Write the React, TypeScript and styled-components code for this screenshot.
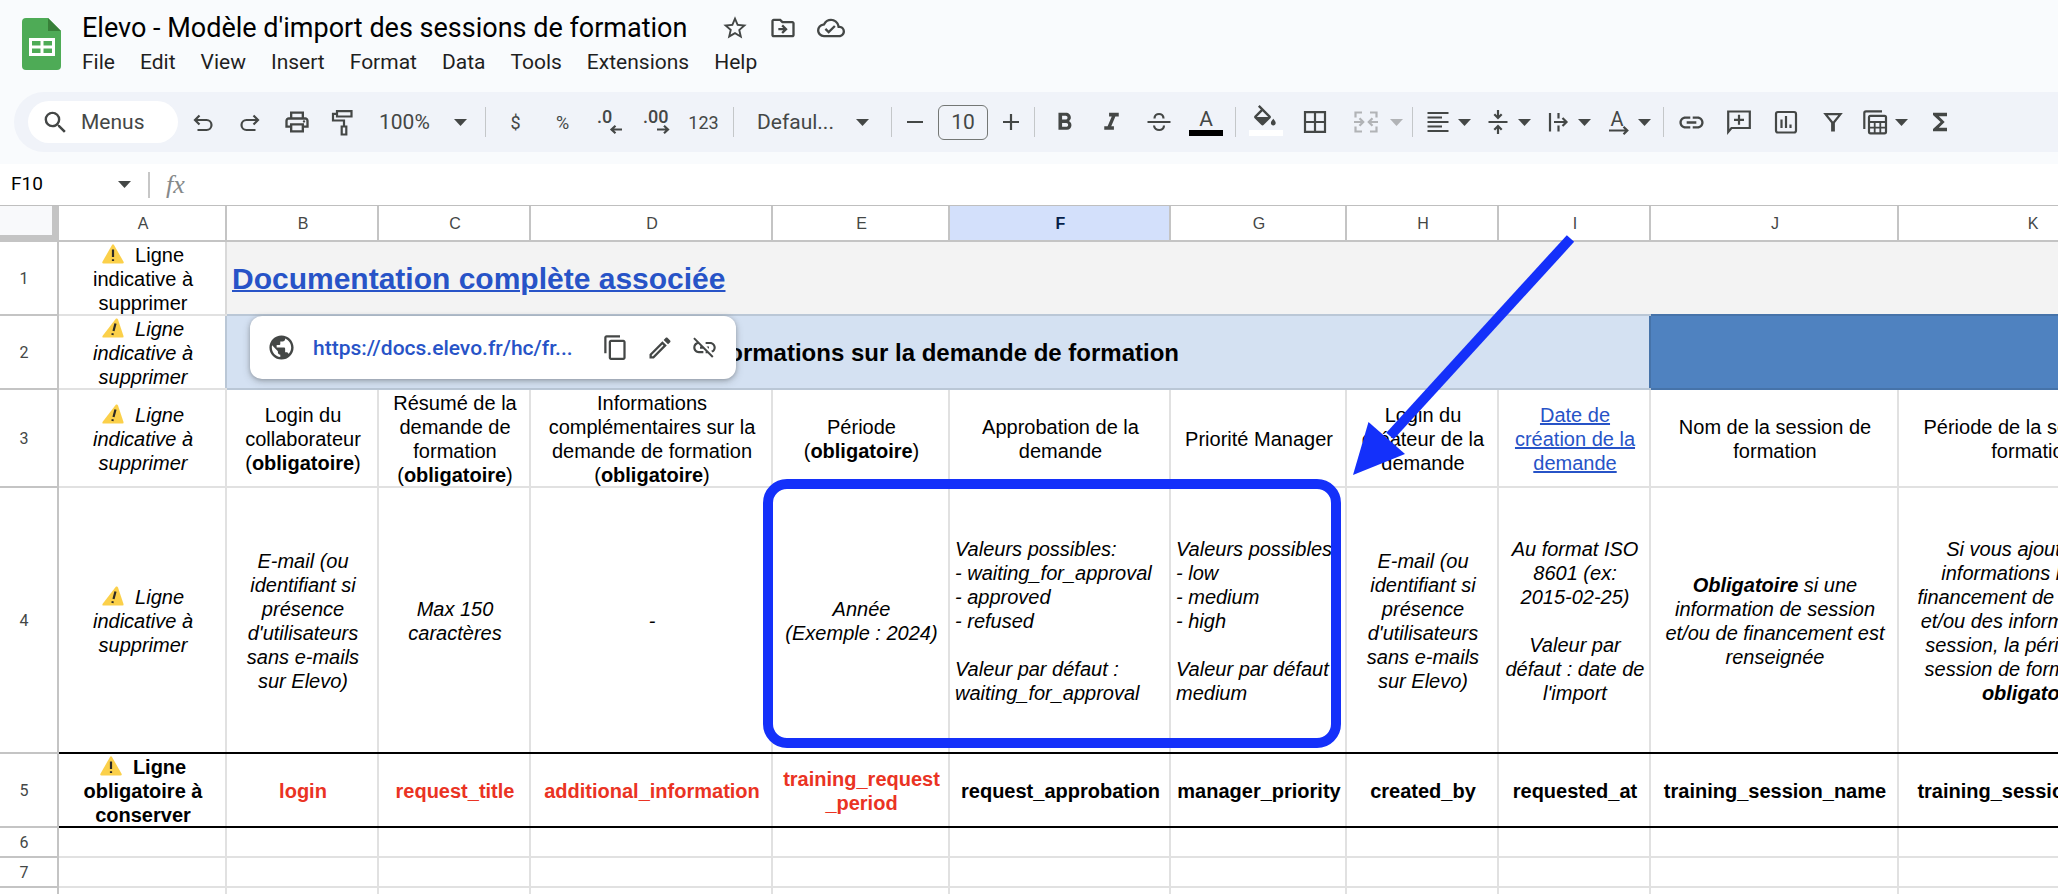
import React from "react";
import styled, { createGlobalStyle, css } from "styled-components";
import {
  MdContentCopy,
  MdFormatBold,
  MdFormatItalic,
  MdFunctions,
  MdLink,
  MdLinkOff,
  MdOutlineCloudDone,
  MdOutlineDriveFileMove,
  MdOutlineEdit,
  MdOutlinePrint,
  MdPublic,
  MdSearch,
  MdStarOutline,
} from "react-icons/md";

const ui = '"Roboto", "Liberation Sans", sans-serif';
const sheetFont = '"Liberation Sans", Arial, sans-serif';
const ink = "#444746";
const line = "#e1e1e1";
const headLine = "#c4c4c4";
const paleBlue = "#d4e1f2";
const paleBlueLine = "#bac7d6";
const midBlue = "#4f82c0";
const midBlueLine = "#4673a9";
const marker = "#1430fa";

const GlobalStyle = createGlobalStyle`
  *, *::before, *::after { box-sizing: border-box; }
  body { margin: 0; background: #f9fbfd; font-family: ${ui}; color: #000; }
  button, input, select { font: inherit; color: inherit; }
`;

const Page = styled.div`
  display: flex;
  flex-direction: column;
  height: 100vh;
  overflow: hidden;
`;

/* ---------- title and menus ---------- */

const Header = styled.header`
  display: flex;
  align-items: flex-start;
  gap: 21px;
  height: 92px;
  flex: none;
  padding: 10px 22px 0;
`;

const LogoLink = styled.a`
  display: block;
  margin-top: 8px;
  height: 52px;
`;

const TitleRow = styled.div`
  display: flex;
  align-items: center;
  gap: 34px;
  height: 36px;
`;

const Title = styled.h1`
  margin: 0;
  font-size: 27px;
  line-height: 36px;
  font-weight: 400;
  white-space: nowrap;
`;

const TitleActions = styled.div`
  display: flex;
  gap: 20px;
`;

const PlainButton = styled.button`
  display: flex;
  align-items: center;
  justify-content: center;
  padding: 0;
  border: 0;
  background: none;
  color: ${ink};
`;

const MenuBar = styled.nav`
  display: flex;
  gap: 25px;
`;

const MenuItem = styled.button`
  padding: 0;
  border: 0;
  background: none;
  color: #1f1f1f;
  font-size: 21px;
  line-height: 32px;
`;

/* ---------- toolbar ---------- */

const Toolbar = styled.div`
  display: flex;
  align-items: center;
  flex: none;
  height: 60px;
  margin-left: 14px;
  padding-left: 14px;
  border-radius: 30px 0 0 30px;
  background: #f0f3f9;
  color: ${ink};
  font-size: 21px;
  overflow: hidden;
`;

const SearchPill = styled.label`
  display: flex;
  align-items: center;
  gap: 11px;
  flex: none;
  width: 150px;
  height: 42px;
  margin-right: 1px;
  padding-left: 13px;
  border-radius: 21px;
  background: #fff;
`;

const SearchInput = styled.input`
  width: 80px;
  padding: 0;
  border: 0;
  outline: 0;
  background: none;
  &::placeholder { color: ${ink}; opacity: 1; }
`;

const Tool = styled(PlainButton)<{ $w?: number; $small?: boolean }>`
  flex: none;
  width: ${(p) => p.$w ?? 47}px;
  height: 42px;
  ${(p) => p.$small && css`font-size: 18px;`}
`;

const MenuTool = styled(PlainButton)<{ $wide?: boolean; $off?: boolean }>`
  flex: none;
  justify-content: flex-start;
  width: ${(p) => (p.$wide ? 66 : 60)}px;
  height: 42px;
  gap: ${(p) => (p.$wide ? 9 : 5)}px;
  padding-left: ${(p) => (p.$wide ? 11 : 4)}px;
  ${(p) => p.$off && css`color: #b1b3b6;`}
`;

const Divider = styled.span<{ $tight?: boolean }>`
  flex: none;
  width: 1px;
  height: 30px;
  margin: 0 ${(p) => (p.$tight ? 4 : 6)}px;
  background: #c4c7c9;
`;

const Picker = styled.label<{ $w: number; $pad: number }>`
  display: flex;
  align-items: center;
  flex: none;
  width: ${(p) => p.$w}px;
  padding: 0 ${(p) => (p.$w > 120 ? 16 : 12)}px 0 ${(p) => p.$pad}px;
`;

const PickerSelect = styled.select`
  flex: 1;
  min-width: 0;
  padding: 0;
  border: 0;
  appearance: none;
  background: none;
`;

const SizeInput = styled.input`
  flex: none;
  width: 50px;
  height: 35px;
  margin: 0 6px;
  padding: 0;
  border: 1px solid #747775;
  border-radius: 6px;
  background: none;
  text-align: center;
`;

/* ---------- formula bar ---------- */

const FormulaBar = styled.div`
  display: flex;
  align-items: center;
  flex: none;
  height: 41px;
  margin-top: 12px;
  padding-left: 11px;
  background: #fff;
  color: ${ink};
`;

const NameBox = styled.input`
  width: 107px;
  padding: 0 0 2px;
  border: 0;
  background: none;
  color: #000;
  font-size: 19px;
`;

const FormulaDivider = styled.span`
  width: 2px;
  height: 26px;
  margin: 0 16px 0 17px;
  background: #c7c7c7;
`;

const Fx = styled.span`
  color: #85898a;
  font: italic 26px/30px "Liberation Serif", serif;
`;

const FormulaInput = styled.input`
  flex: 1;
  margin-left: 16px;
  border: 0;
  outline: 0;
  background: none;
`;

/* ---------- sheet ---------- */

const Viewport = styled.main`
  flex: 1;
  min-height: 0;
  overflow: hidden;
  border-top: 1px solid #bfbfbf;
  background: #fff;
`;

const Sheet = styled.div`
  position: relative;
  width: max-content;
`;

const Grid = styled.table`
  table-layout: fixed;
  width: 2167px;
  border-collapse: separate;
  border-spacing: 0;
  font: 20px/24px ${sheetFont};
`;

/* Grid lines are inset shadows, so they take no room from the cell's text. */
const gridLines = (right: string, bottom: string) => css`
  box-shadow: inset 0 -2px 0 ${bottom}, inset -2px 0 0 ${right};
`;

const Corner = styled.td`
  height: 36px;
  padding: 0;
  border: solid ${headLine};
  border-width: 0 7px 7px 0;
  background: #f8f9fb;
`;

const ColHead = styled.th<{ $on?: boolean }>`
  height: 36px;
  padding: 0;
  ${gridLines(headLine, headLine)}
  background: ${(p) => (p.$on ? "#d3e0fb" : "#fff")};
  color: ${(p) => (p.$on ? "#041e49" : ink)};
  font-size: 16px;
  font-weight: ${(p) => (p.$on ? 700 : 400)};
`;

const RowHead = styled.th`
  padding: 0 11px 0 0;
  ${gridLines(headLine, headLine)}
  background: #fff;
  color: ${ink};
  font: 400 16px/24px ${ui};
`;

const Row = styled.tr<{ $h: number }>`
  height: ${(p) => p.$h}px;
`;

const Cell = styled.td<{
  $italic?: boolean;
  $bold?: boolean;
  $left?: boolean;
  $red?: boolean;
  $fill?: string;
  $right?: string;
  $bottom?: string;
}>`
  padding: 0 ${(p) => (p.$left ? 5 : 0)}px;
  ${(p) => gridLines(p.$right ?? line, p.$bottom ?? line)}
  background: ${(p) => p.$fill ?? "#fff"};
  color: ${(p) => (p.$red ? "#ea3323" : "#000")};
  font-style: ${(p) => (p.$italic ? "italic" : "normal")};
  font-weight: ${(p) => (p.$bold ? 700 : 400)};
  text-align: ${(p) => (p.$left ? "left" : "center")};
  vertical-align: middle;
  white-space: pre;
  overflow: hidden;
`;

const SheetLink = styled.a<{ $big?: boolean }>`
  color: #2753c7;
  text-decoration: underline;
  text-decoration-thickness: 2px;
  ${(p) => p.$big && css`font-size: 30px; line-height: 36px; font-weight: 700;`}
`;

const Band = styled.span`
  font-size: 24px;
  line-height: 30px;
`;

const WarnSvg = styled.svg`
  width: 22px;
  height: 20px;
  vertical-align: -2px;
`;

/* ---------- layers above the sheet ---------- */

const LinkCard = styled.div`
  position: absolute;
  left: 250px;
  top: 110px;
  display: flex;
  align-items: center;
  width: 486px;
  height: 63px;
  padding: 0 18px 0 17px;
  border-radius: 12px;
  background: #fff;
  box-shadow: 0 1px 4px rgba(60, 64, 67, 0.35), 0 3px 8px rgba(60, 64, 67, 0.2);
  color: ${ink};
`;

const CardUrl = styled.a`
  flex: 1;
  margin-left: 17px;
  color: #2753c7;
  font-size: 21px;
  font-weight: 500;
  text-decoration: none;
`;

const CardActions = styled.div`
  display: flex;
  gap: 17px;
`;

const Frame = styled.div`
  position: absolute;
  left: 763px;
  top: 273px;
  width: 578px;
  height: 269px;
  border: 10px solid ${marker};
  border-radius: 24px;
  pointer-events: none;
`;

const ArrowLayer = styled.svg`
  position: absolute;
  left: 1340px;
  top: 24px;
  pointer-events: none;
`;

/* ---------- drawings ---------- */

const Caret = () => (
  <svg width="13" height="7" viewBox="0 0 13 7" fill="currentColor" aria-hidden="true">
    <path d="M0 0H13L6.500 7Z" />
  </svg>
);

const Glyph = ({ w = 30, children }: { w?: number; children: React.ReactNode }) => (
  <svg
    width={w}
    height="30"
    viewBox={`0 0 ${w} 30`}
    fill="none"
    stroke="currentColor"
    strokeWidth="2.2"
    overflow="visible"
    aria-hidden="true"
  >
    {children}
  </svg>
);

const letter = { fill: "currentColor", stroke: "none", fontFamily: "Roboto, sans-serif" };

const Logo = () => (
  <svg width="39" height="52" viewBox="0 0 39 52" aria-hidden="true">
    <path d="M4 0H26L39 13V48a4 4 0 0 1-4 4H4a4 4 0 0 1-4-4V4a4 4 0 0 1 4-4Z" fill="#4eab56" />
    <path d="M26 0L39 13H26Z" fill="#388039" />
    <path d="M7 20H33V38H7ZM10 23V27.500H18.500V23ZM21.500 23V27.500H30V23ZM10 30.500V35H18.500V30.500ZM21.500 30.500V35H30V30.500Z" fill="#fff" fillRule="evenodd" />
  </svg>
);

const Warn = ({ slant }: { slant?: boolean }) => (
  <WarnSvg viewBox="0 0 22 20" role="img" aria-label="Attention">
    <path
      d={slant ? "M14 0.500Q15.500 0 16 1.500L21.500 18Q22 19.500 20.500 19.500H1Q0 19.500 0.500 18Z" : "M10 1Q11 -0.500 12 1L21.700 18Q22 19.500 20.500 19.500H1.500Q0 19.500 0.300 18Z"}
      fill="#fbd04a"
    />
    <path
      d={slant ? "M13.500 5.500L11.500 13M10.800 15.200L10.400 17" : "M11 5.500V13M11 15.200V17"}
      stroke="#2c2a26"
      strokeWidth="2.200"
    />
  </WarnSvg>
);

/* ---------- content ---------- */

const menus = ["File", "Edit", "View", "Insert", "Format", "Data", "Tools", "Extensions", "Help"];
const columns = [168, 152, 152, 242, 177, 221, 176, 152, 152, 248, 268];
const letters = "ABCDEFGHIJK".split("");

const Note = ({ bottom, right }: { bottom?: string; right?: string }) => (
  <Cell $italic $bottom={bottom} $right={right}>
    <Warn slant />
    {"\u00a0 Ligne\nindicative à\nsupprimer"}
  </Cell>
);

const mailHint = "E-mail (ou\nidentifiant si\nprésence\nd'utilisateurs\nsans e-mails\nsur Elevo)";

const fields: { name: string; required?: boolean }[] = [
  { name: "login", required: true },
  { name: "request_title", required: true },
  { name: "additional_information", required: true },
  { name: "training_request\n_period", required: true },
  { name: "request_approbation" },
  { name: "manager_priority" },
  { name: "created_by" },
  { name: "requested_at" },
  { name: "training_session_name" },
  { name: "training_session_period" },
];

const TopBar = () => (
  <Header>
    <LogoLink href="#" aria-label="Sheets home">
      <Logo />
    </LogoLink>
    <div>
      <TitleRow>
        <Title>Elevo - Modèle d'import des sessions de formation</Title>
        <TitleActions>
          <PlainButton aria-label="Star"><MdStarOutline size={28} /></PlainButton>
          <PlainButton aria-label="Move"><MdOutlineDriveFileMove size={28} /></PlainButton>
          <PlainButton aria-label="Saved to Drive"><MdOutlineCloudDone size={28} /></PlainButton>
        </TitleActions>
      </TitleRow>
      <MenuBar>
        {menus.map((m) => (
          <MenuItem key={m}>{m}</MenuItem>
        ))}
      </MenuBar>
    </div>
  </Header>
);

const Tools = () => (
  <Toolbar role="toolbar">
    <SearchPill>
      <MdSearch size={29} aria-hidden="true" />
      <SearchInput placeholder="Menus" aria-label="Menus" />
    </SearchPill>
    <Tool aria-label="Undo">
      <Glyph><path d="M11.500 8.500L7 13L11.500 17.500M7.500 13H18.500A5 5 0 0 1 18.500 23H9.500" /></Glyph>
    </Tool>
    <Tool aria-label="Redo">
      <Glyph><path d="M18.500 8.500L23 13L18.500 17.500M22.500 13H11.500A5 5 0 0 0 11.500 23H20.500" /></Glyph>
    </Tool>
    <Tool aria-label="Print"><MdOutlinePrint size={28} /></Tool>
    <Tool aria-label="Paint format">
      <Glyph><path d="M8 4.200H22.500V9.500H8ZM8 6.800H4V13.500H15V19M12.700 19.500H17.300V27.500H12.700Z" /></Glyph>
    </Tool>
    <Picker $w={112} $pad={12}>
      <PickerSelect aria-label="Zoom" defaultValue="100%"><option>100%</option></PickerSelect>
      <Caret />
    </Picker>
    <Divider />
    <Tool $small aria-label="Format as currency">$</Tool>
    <Tool $small aria-label="Format as percent">%</Tool>
    <Tool aria-label="Decrease decimal places">
      <Glyph>
        <text x="2" y="16" fontSize="18" fontWeight="500" {...letter}>.0</text>
        <path d="M27 22.500H17M20.500 18.800L16.500 22.500L20.500 26.200" />
      </Glyph>
    </Tool>
    <Tool aria-label="Increase decimal places">
      <Glyph>
        <text x="1" y="16" fontSize="18" fontWeight="500" {...letter}>.00</text>
        <path d="M15 22.500H26M22 18.800L26 22.500L22 26.200" />
      </Glyph>
    </Tool>
    <Tool $small aria-label="More formats">123</Tool>
    <Divider />
    <Picker $w={145} $pad={17}>
      <PickerSelect aria-label="Font" defaultValue="Defaul..."><option>Defaul...</option></PickerSelect>
      <Caret />
    </Picker>
    <Divider />
    <Tool $w={34} aria-label="Decrease font size"><Glyph><path d="M7 15H23" /></Glyph></Tool>
    <SizeInput aria-label="Font size" defaultValue="10" />
    <Tool $w={34} aria-label="Increase font size"><Glyph><path d="M7 15H23M15 7V23" /></Glyph></Tool>
    <Divider />
    <Tool aria-label="Bold"><MdFormatBold size={29} /></Tool>
    <Tool aria-label="Italic"><MdFormatItalic size={29} /></Tool>
    <Tool aria-label="Strikethrough">
      <Glyph>
        <path d="M3.500 15H26.500M10.500 11.500C10.500 5.500 19.500 5.500 19.500 11.500M10 18.500C10.500 24.500 20 24.500 20 18.500" />
      </Glyph>
    </Tool>
    <Tool aria-label="Text color">
      <Glyph w={34}>
        <text x="17" y="19" fontSize="21" textAnchor="middle" {...letter}>A</text>
        <rect y="23" width="34" height="6" fill="#000" stroke="none" />
      </Glyph>
    </Tool>
    <Divider />
    <Tool aria-label="Fill color">
      <Glyph w={34}>
        <g transform="translate(1.500 -2) scale(1.200)" fill="currentColor" stroke="none">
          <path d="M16.560 8.940L7.620 0 6.210 1.410l2.380 2.380-5.150 5.150c-.59.59-.59 1.540 0 2.120l5.500 5.500c.29.29.68.44 1.060.44s.77-.15 1.060-.44l5.500-5.500c.59-.58.59-1.530 0-2.120zM5.210 10L10 5.210 14.790 10H5.210zM19 11.500s-2 2.170-2 3.500c0 1.100.9 2 2 2s2-.9 2-2c0-1.330-2-3.500-2-3.500z" />
        </g>
        <rect y="23" width="34" height="6" fill="#fff" stroke="none" />
      </Glyph>
    </Tool>
    <Tool $w={51} aria-label="Borders">
      <Glyph><path d="M5 5.200H25V24.800H5ZM15 5V25M5 15H25" /></Glyph>
    </Tool>
    <MenuTool $wide $off aria-label="Merge cells">
      <Glyph>
        <path d="M11 5.500H4.500V10.500M4.500 19.500V24.500H11M19 5.500H25.500V10.500M25.500 19.500V24.500H19M3 15H12M8.500 11.300L12.200 15L8.500 18.700M27 15H18M21.500 11.300L17.800 15L21.500 18.700" />
      </Glyph>
      <Caret />
    </MenuTool>
    <Divider />
    <MenuTool aria-label="Horizontal align">
      <Glyph><path d="M4.500 6H25.500M4.500 10.500H19M4.500 15H25.500M4.500 19.500H19M4.500 24H25.500" strokeWidth="2" /></Glyph>
      <Caret />
    </MenuTool>
    <MenuTool aria-label="Vertical align">
      <Glyph><path d="M5.500 15H24.500M15 3V10M11.300 7.300L15 11L18.700 7.300M15 27V20M11.300 22.700L15 19L18.700 22.700" /></Glyph>
      <Caret />
    </MenuTool>
    <MenuTool aria-label="Text wrapping">
      <Glyph><path d="M7 6V24.500M15.500 6V11.500M15.500 18.500V24.500M11 15H23M19.500 11L23.500 15L19.500 19" /></Glyph>
      <Caret />
    </MenuTool>
    <MenuTool aria-label="Text rotation">
      <Glyph>
        <text x="14" y="19" fontSize="20" textAnchor="middle" {...letter}>A</text>
        <path d="M6 23.500H24M20.500 19.800L24.300 23.500L20.500 27.200" />
      </Glyph>
      <Caret />
    </MenuTool>
    <Divider $tight />
    <Tool aria-label="Insert link"><MdLink size={29} /></Tool>
    <Tool aria-label="Insert comment">
      <Glyph><path d="M4.200 25V4.500H25.800V21H7.500ZM15 7.800V17.800M10 12.800H20" /></Glyph>
    </Tool>
    <Tool aria-label="Insert chart">
      <Glyph><rect x="5" y="5" width="20" height="20.500" rx="2" /><path d="M10.500 12.500V21M15 9V21M19.500 17.500V21" /></Glyph>
    </Tool>
    <Tool aria-label="Create a filter">
      <Glyph><path d="M7.500 7.200H22.500L15.800 15.500V23.500H14.200V15.500Z" /></Glyph>
    </Tool>
    <MenuTool aria-label="Filter views">
      <Glyph>
        <path d="M4.300 22V6Q4.300 4.300 6 4.300H22" />
        <rect x="9" y="8.800" width="17" height="17.500" rx="1.500" />
        <path d="M9 15H26M9 20.700H26M14.700 15V26M20.300 15V26" strokeWidth="1.800" />
      </Glyph>
      <Caret />
    </MenuTool>
    <Tool aria-label="Functions"><MdFunctions size={28} /></Tool>
  </Toolbar>
);

const SheetGrid = () => (
  <Grid>
    <colgroup>
      <col width="59" />
      {columns.map((w, i) => (
        <col key={i} width={w} />
      ))}
    </colgroup>
    <thead>
      <tr>
        <Corner />
        {letters.map((l) => (
          <ColHead key={l} scope="col" $on={l === "F"}>{l}</ColHead>
        ))}
      </tr>
    </thead>
    <tbody>
      <Row $h={74}>
        <RowHead scope="row">1</RowHead>
        <Cell $right="#d9d9d9">
          <Warn />
          {"\u00a0 Ligne\nindicative à\nsupprimer"}
        </Cell>
        <Cell colSpan={8} $left $fill="#f3f3f3" $right="#f3f3f3" $bottom={paleBlueLine}>
          <SheetLink $big href="#">Documentation complète associée</SheetLink>
        </Cell>
        <Cell colSpan={2} $fill="#f3f3f3" $right="#f3f3f3" $bottom={midBlueLine} />
      </Row>
      <Row $h={74}>
        <RowHead scope="row">2</RowHead>
        <Note right={paleBlueLine} />
        <Cell colSpan={8} $bold $fill={paleBlue} $right={midBlueLine} $bottom={paleBlueLine}>
          <Band>Informations sur la demande de formation</Band>
        </Cell>
        <Cell colSpan={2} $fill={midBlue} $right={midBlueLine} $bottom={midBlueLine} />
      </Row>
      <Row $h={98}>
        <RowHead scope="row">3</RowHead>
        <Note />
        <Cell>{"Login du\ncollaborateur\n"}(<b>obligatoire</b>)</Cell>
        <Cell>{"Résumé de la\ndemande de\nformation\n"}(<b>obligatoire</b>)</Cell>
        <Cell>{"Informations\ncomplémentaires sur la\ndemande de formation\n"}(<b>obligatoire</b>)</Cell>
        <Cell>{"Période\n"}(<b>obligatoire</b>)</Cell>
        <Cell>{"Approbation de la\ndemande"}</Cell>
        <Cell>Priorité Manager</Cell>
        <Cell>{"Login du\ncréateur de la\ndemande"}</Cell>
        <Cell><SheetLink href="#">{"Date de\ncréation de la\ndemande"}</SheetLink></Cell>
        <Cell>{"Nom de la session de\nformation"}</Cell>
        <Cell>{"Période de la session de\nformation"}</Cell>
      </Row>
      <Row $h={266}>
        <RowHead scope="row">4</RowHead>
        <Note bottom="#000" />
        <Cell $italic $bottom="#000">{mailHint}</Cell>
        <Cell $italic $bottom="#000">{"Max 150\ncaractères"}</Cell>
        <Cell $italic $bottom="#000">-</Cell>
        <Cell $italic $bottom="#000">{"Année\n(Exemple : 2024)"}</Cell>
        <Cell $italic $left $bottom="#000">
          {"Valeurs possibles:\n- waiting_for_approval\n- approved\n- refused\n\nValeur par défaut :\nwaiting_for_approval"}
        </Cell>
        <Cell $italic $left $bottom="#000">
          {"Valeurs possibles:\n- low\n- medium\n- high\n\nValeur par défaut :\nmedium"}
        </Cell>
        <Cell $italic $bottom="#000">{mailHint}</Cell>
        <Cell $italic $bottom="#000">
          {"Au format ISO\n8601 (ex:\n2015-02-25)\n\nValeur par\ndéfaut : date de\nl'import"}
        </Cell>
        <Cell $italic $bottom="#000">
          <b>Obligatoire</b>{" si une\ninformation de session\net/ou de financement est\nrenseignée"}
        </Cell>
        <Cell $italic $bottom="#000">
          {"Si vous ajoutez des\ninformations liées au\nfinancement de la session\net/ou des informations de\nsession, la période de la\nsession de formation est\n"}
          <b>obligatoire</b>
        </Cell>
      </Row>
      <Row $h={74}>
        <RowHead scope="row">5</RowHead>
        <Cell $bold $bottom="#000">
          <Warn />
          {"\u00a0 Ligne\nobligatoire à\nconserver"}
        </Cell>
        {fields.map((f) => (
          <Cell key={f.name} $bold $red={f.required} $bottom="#000">{f.name}</Cell>
        ))}
      </Row>
      {["6", "7", ""].map((n) => (
        <Row key={n} $h={30}>
          <RowHead scope="row">{n}</RowHead>
          {letters.map((l) => (
            <Cell key={l} />
          ))}
        </Row>
      ))}
    </tbody>
  </Grid>
);

export default function App() {
  return (
    <Page>
      <GlobalStyle />
      <TopBar />
      <Tools />
      <FormulaBar>
        <NameBox aria-label="Name box" defaultValue="F10" />
        <Caret />
        <FormulaDivider />
        <Fx>fx</Fx>
        <FormulaInput aria-label="Formula" />
      </FormulaBar>
      <Viewport>
        <Sheet>
          <SheetGrid />
          <LinkCard>
            <MdPublic size={29} aria-hidden="true" />
            <CardUrl href="#">https://docs.elevo.fr/hc/fr...</CardUrl>
            <CardActions>
              <PlainButton aria-label="Copy link"><MdContentCopy size={27} /></PlainButton>
              <PlainButton aria-label="Edit link"><MdOutlineEdit size={28} /></PlainButton>
              <PlainButton aria-label="Remove link"><MdLinkOff size={27} /></PlainButton>
            </CardActions>
          </LinkCard>
          <Frame />
          <ArrowLayer width="250" height="260" viewBox="0 0 250 260" aria-hidden="true">
            <path d="M230.500 8.500L50 206" stroke={marker} strokeWidth="10" />
            <path d="M13 245L28.500 192L65 224Z" fill={marker} />
          </ArrowLayer>
        </Sheet>
      </Viewport>
    </Page>
  );
}
